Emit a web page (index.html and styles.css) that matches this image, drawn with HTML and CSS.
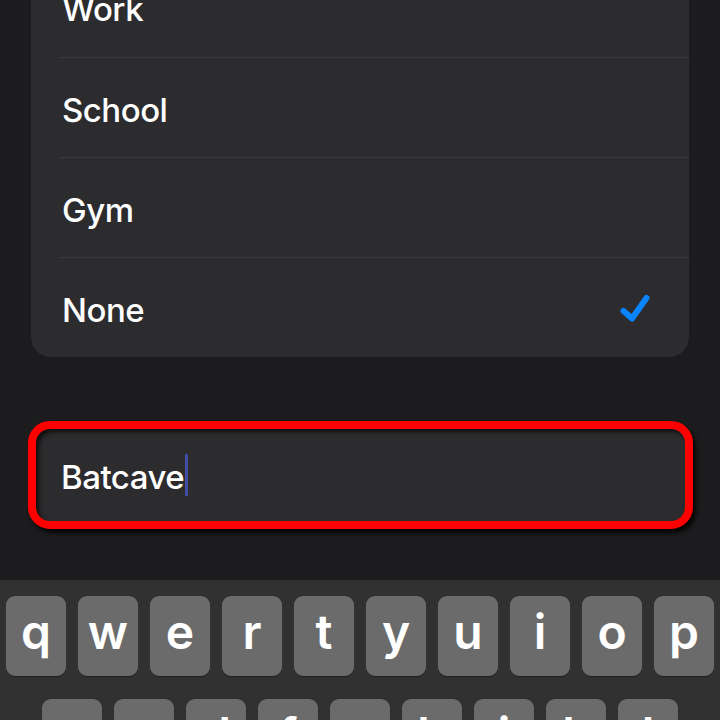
FILE: index.html
```html
<!DOCTYPE html>
<html lang="en">
<head>
<meta charset="utf-8">
<title>Label</title>
<link rel="stylesheet" href="styles.css">
</head>
<body>
<div class="screen">
  <div class="list">
    <div class="row"><span class="label">Work</span></div>
    <div class="row"><span class="label">School</span></div>
    <div class="row"><span class="label">Gym</span></div>
    <div class="row"><span class="label">None</span>
      <svg class="check" viewBox="0 0 32 32" width="32" height="32" aria-hidden="true">
        <path d="M4.5 19 L13 26.5 L27.5 6" fill="none" stroke="#0a84ff" stroke-width="6" stroke-linecap="round" stroke-linejoin="round"/>
      </svg>
    </div>
  </div>

  <div class="field">
    <span class="field-text">Batcave</span><span class="caret"></span>
  </div>

  <div class="keyboard">
    <div class="key-row top">
      <div class="key">q</div><div class="key">w</div><div class="key">e</div><div class="key">r</div><div class="key">t</div>
      <div class="key">y</div><div class="key">u</div><div class="key">i</div><div class="key">o</div><div class="key">p</div>
    </div>
    <div class="key-row middle">
      <div class="key">a</div><div class="key">s</div><div class="key">d</div><div class="key">f</div><div class="key">g</div>
      <div class="key">h</div><div class="key">j</div><div class="key">k</div><div class="key">l</div>
    </div>
  </div>
</div>
</body>
</html>
```

FILE: styles.css
```css
* {
  box-sizing: border-box;
}

html, body {
  margin: 0;
  height: 100%;
}

body {
  background: #1c1c1e;
  font-family: Inter, "Liberation Sans", sans-serif;
  color: #ffffff;
  overflow: hidden;
}

.screen {
  display: flex;
  flex-direction: column;
  height: 720px;
}

/* grouped list of options; its top scrolls past the screen edge */
.list {
  flex: none;
  margin: -43px 31px 0 31px;
  background: #2c2c2e;
  border-radius: 20px;
}

.row {
  height: 100px;
  margin-left: 29px;
  padding: 4px 38px 0 2px;
  display: flex;
  align-items: center;
  justify-content: space-between;
}

.row + .row {
  border-top: 1px solid #3a3a3c;
}

.label {
  font-size: 33px;
  font-weight: 500;
  letter-spacing: -0.5px;
}

.check {
  display: block;
  margin-top: -4px;
}

/* text input, outlined in red */
.field {
  flex: none;
  margin: 64px 27px 51px 28px;
  height: 108px;
  border: 8px solid #ff0000;
  border-radius: 22px;
  background: #2c2c2e;
  display: flex;
  align-items: center;
  padding: 4px 0 0 25px;
  box-shadow: 3px 4px 4px rgba(0, 0, 0, 0.85), inset 3px 3px 4px rgba(0, 0, 0, 0.7);
}

.field-text {
  font-size: 33px;
  font-weight: 500;
  letter-spacing: -0.5px;
}

.caret {
  width: 3px;
  height: 42px;
  margin-left: 1px;
  margin-top: -4px;
  background: #3d4ea3;
  border-radius: 1px;
}

/* on-screen keyboard */
.keyboard {
  flex: 1;
  background: #313131;
  padding-top: 16px;
  overflow: hidden;
}

.key-row {
  display: flex;
  gap: 12px;
}

.key-row.top {
  padding: 0 6px;
  margin-bottom: 23px;
}

.key-row.middle {
  padding-left: 42px;
}

.key {
  width: 60px;
  height: 80px;
  flex: none;
  background: #6b6b6b;
  border-radius: 9px;
  box-shadow: 0 1px 0 #1f1f1f;
  display: flex;
  align-items: center;
  justify-content: center;
  padding-bottom: 9px;
  font-size: 48px;
  font-weight: 600;
  line-height: 1;
}
```
